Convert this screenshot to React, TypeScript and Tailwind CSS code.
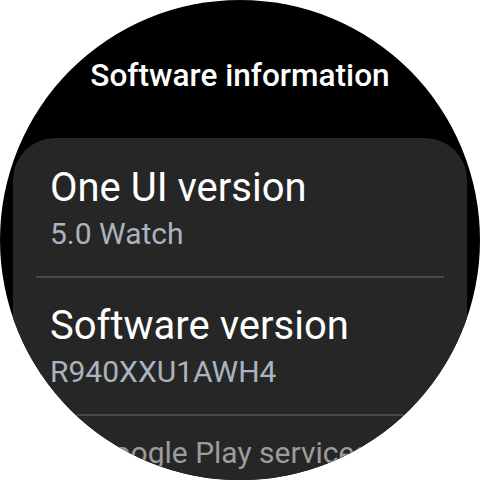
export default function App() {
  const items = [
    { title: "One UI version", value: "5.0 Watch" },
    { title: "Software version", value: "R940XXU1AWH4" },
  ];
  return (
    <div className="w-[480px] h-[480px] bg-white" style={{ fontFamily: "Roboto, 'Noto Sans', sans-serif" }}>
      <div className="w-[480px] h-[480px] rounded-full bg-black overflow-hidden flex flex-col">
        <div className="pt-[58px] text-center text-white text-[31.6px] leading-[36px] font-medium">
          Software information
        </div>
        <div className="mt-[44px] mx-[13px] flex-1 bg-[#262626] rounded-t-[42px] pt-[26px] flex flex-col">
          {items.map((it) => (
            <div key={it.title} className="flex flex-col">
              <div className="pl-[37px] text-white text-[40px] leading-[48px]">{it.title}</div>
              <div className="pl-[37px] mt-[4px] text-[#a9b4bf] text-[30px] leading-[36px]">{it.value}</div>
              <div className="mx-[23px] mt-[24px] mb-[24px] h-[2px] bg-[#484848]" />
            </div>
          ))}
          <div className="-mt-[5px] pl-[80px] text-[#9c9c9c] text-[30px] leading-[36px] whitespace-nowrap">Google Play services</div>
        </div>
      </div>
    </div>
  );
}
